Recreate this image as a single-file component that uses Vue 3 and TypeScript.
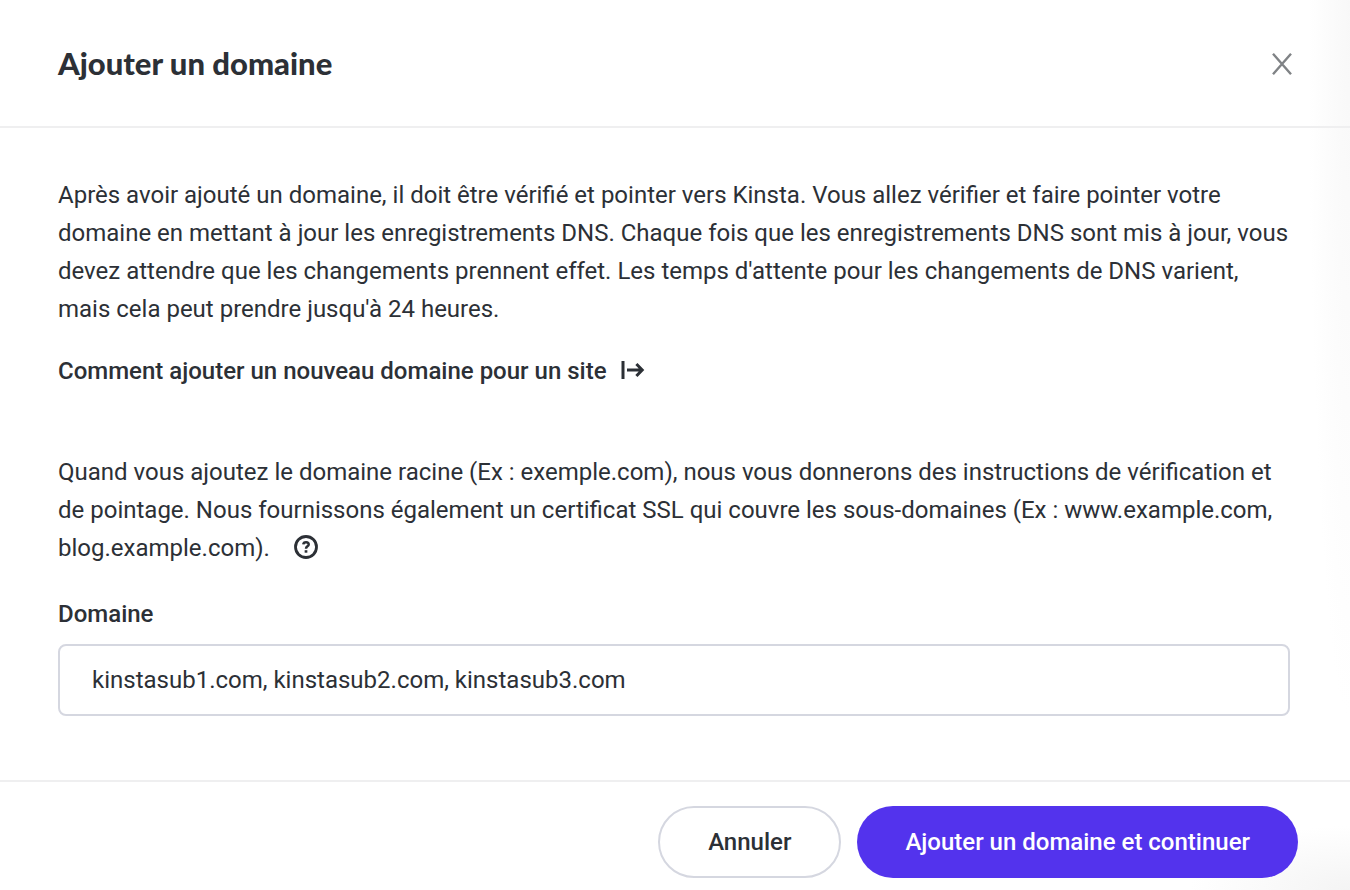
<script setup lang="ts">
import { ref } from 'vue'

const domains = ref('kinstasub1.com, kinstasub2.com, kinstasub3.com')
</script>

<template>
  <section class="dialog" role="dialog" aria-labelledby="dialog-title">
    <header class="header">
      <h1 id="dialog-title" class="title">Ajouter un domaine</h1>
      <button class="close" type="button" aria-label="Fermer">
        <svg width="24" height="24" viewBox="0 0 24 24" fill="none" stroke="#808386" stroke-width="2.4">
          <path d="M3 2.8 L21 23.2 M21 2.8 L3 23.2" />
        </svg>
      </button>
    </header>

    <form id="domain-form" class="body" @submit.prevent>
      <p class="text">
        Après avoir ajouté un domaine, il doit être vérifié et pointer vers Kinsta. Vous allez vérifier et faire
        pointer votre domaine en mettant à jour les enregistrements DNS. Chaque fois que les enregistrements DNS sont
        mis à jour, vous devez attendre que les changements prennent effet. Les temps d'attente pour les changements de
        DNS varient, mais cela peut prendre jusqu'à 24 heures.
      </p>
      <a class="link" href="#">
        Comment ajouter un nouveau domaine pour un site
        <svg width="24" height="20" viewBox="0 0 24 20" fill="none" stroke="#2c3036" stroke-width="3">
          <path d="M2 0 V18 M6 9 H21.5 M15.4 3 L21.2 9 L15.4 15" />
        </svg>
      </a>
      <p class="text hint">
        Quand vous ajoutez le domaine racine (Ex : exemple.com), nous vous donnerons des instructions de vérification et
        de pointage. Nous fournissons également un certificat SSL qui couvre les sous-domaines (Ex : www.example.com,
        blog.example.com).
        <button class="help" type="button" aria-label="Aide">
          <svg width="24" height="24" viewBox="0 0 24 24" fill="none" stroke="#2c3036">
            <circle cx="12" cy="12" r="10.5" stroke-width="2.8" />
            <path d="M9.3 9.4 C9.5 6.4 14.7 6.4 14.7 9.4 C14.7 11.5 12 11.2 12 13.8" stroke-width="2.5" />
            <path d="M12 15.2 V17.7" stroke-width="2.7" />
          </svg>
        </button>
      </p>
      <label class="label" for="domain">Domaine</label>
      <input id="domain" v-model="domains" class="input" type="text" />
    </form>

    <footer class="footer">
      <button class="button secondary" type="button">Annuler</button>
      <button class="button primary" type="submit" form="domain-form">Ajouter un domaine et continuer</button>
    </footer>
  </section>
</template>

<style>
body {
  margin: 0;
}
</style>

<style scoped>
.dialog {
  box-sizing: border-box;
  min-height: 100vh;
  display: flex;
  flex-direction: column;
  color: #2c3036;
  font: 400 24px/38px Roboto, "Liberation Sans", sans-serif;
  background:
    radial-gradient(ellipse 42px 720px at 100% 0, #f8f8f8, rgba(255, 255, 255, 0)),
    radial-gradient(ellipse 160px 64px at 100% 100%, #f4f4f4, rgba(255, 255, 255, 0)),
    #fff;
}

.header {
  display: flex;
  align-items: center;
  justify-content: space-between;
  padding: 42px 56px 42px 58px;
  border-bottom: 2px solid #efeff0;
}

.title {
  margin: 0;
  font: 900 31px/42px Lato, "Open Sans", sans-serif;
}

.close,
.help {
  padding: 0;
  border: 0;
  background: none;
  cursor: pointer;
}

.close {
  display: flex;
}

.body {
  flex: 1;
  display: flex;
  flex-direction: column;
  padding: 48px 60px 64px 58px;
}

.text {
  margin: 0;
}

.link {
  align-self: flex-start;
  display: flex;
  align-items: center;
  gap: 14px;
  margin-top: 24px;
  color: inherit;
  font-weight: 500;
  text-decoration: none;
}

.hint {
  margin-top: 63px;
}

.help {
  height: 24px;
  margin-left: 18px;
  vertical-align: -3px;
}

.help svg {
  display: block;
}

.label {
  margin-top: 28px;
  font-weight: 500;
}

.input {
  box-sizing: border-box;
  width: 100%;
  height: 72px;
  margin-top: 11px;
  padding: 0 32px;
  border: 2px solid #d5d7e0;
  border-radius: 8px;
  background: #fff;
  color: inherit;
  font: inherit;
}

.footer {
  display: flex;
  justify-content: flex-end;
  gap: 16px;
  padding: 24px 52px 12px;
  border-top: 2px solid #efeff0;
}

.button {
  height: 72px;
  padding: 0 48px;
  border: 0;
  border-radius: 36px;
  font: inherit;
  font-weight: 500;
  cursor: pointer;
}

.secondary {
  border: 2px solid #d5d7e0;
  background: #fff;
  color: inherit;
}

.primary {
  background: #5333ed;
  color: #fff;
}
</style>
